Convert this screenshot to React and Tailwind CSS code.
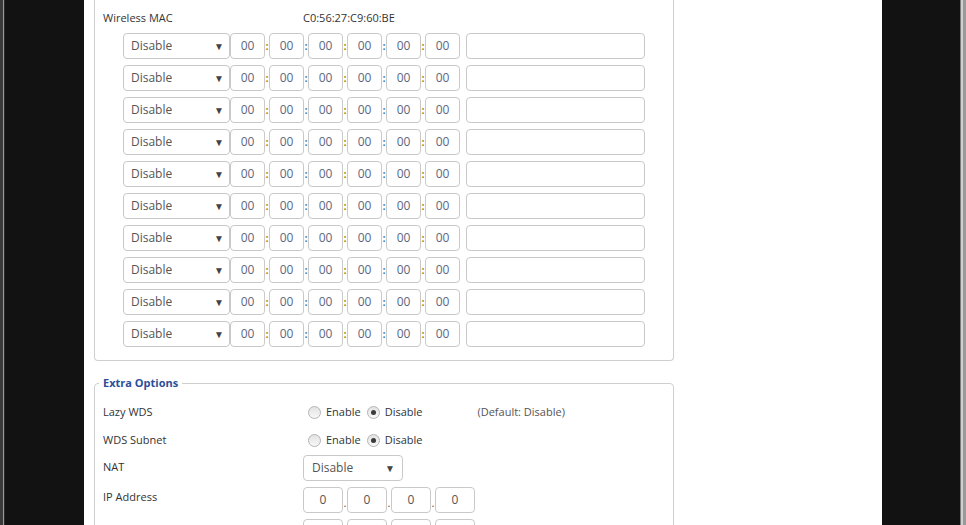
import React from 'react';

const FONT = { fontFamily: '"Open Sans", "Noto Sans", sans-serif' };

const MacRow = () => {
    const parts = ['00', '00', '00', '00', '00', '00'];
    return (
        <div className="flex h-[26px] items-stretch">
            <div className="relative flex w-[107px] items-center rounded-[4px] border border-[#c9c9c9] bg-white pl-[7px] text-[12px] text-[#555]">
                Disable
                <span className="absolute right-[5px] top-[7px] text-[10px] leading-none text-[#444]">▼</span>
            </div>
            <div className="flex">
                {parts.map((p, i) => (
                    <React.Fragment key={i}>
                        {i > 0 && (
                            <span className={`flex w-[4px] items-center justify-center text-[11px] font-bold ${i % 2 ? 'text-[#b08418]' : 'text-[#3d82b8]'}`}>:</span>
                        )}
                        <div className="flex w-[35px] items-center justify-center rounded-[4px] border border-[#c9c9c9] text-[12px] text-[#5a6680]">
                            {p}
                        </div>
                    </React.Fragment>
                ))}
            </div>
            <div className="ml-[6px] w-[179px] rounded-[4px] border border-[#c9c9c9] bg-white" />
        </div>
    );
};

const Radio = ({ checked }) => (
    <span className="flex h-[13px] w-[13px] items-center justify-center rounded-full border border-[#b4b4b4] bg-gradient-to-b from-[#e2e2e2] to-[#f8f8f8]">
        {checked && <span className="h-[5px] w-[5px] rounded-full bg-[#3a3a3a]" />}
    </span>
);

const RadioPair = () => (
    <div className="flex items-center pl-[5px] text-[11px] text-[#333]">
        <Radio />
        <span className="ml-[5px]">Enable</span>
        <span className="ml-[6px]"><Radio checked /></span>
        <span className="ml-[5px]">Disable</span>
    </div>
);

const IpRow = ({ values }) => (
    <div className="flex h-[26px]">
        {values.map((v, i) => (
            <React.Fragment key={i}>
                {i > 0 && <span className="flex w-[4px] items-end justify-center pb-[5px] text-[11px] leading-none text-[#555]">{v ? '.' : ''}</span>}
                <div className="flex w-[40px] items-center justify-center rounded-[4px] border border-[#c9c9c9] text-[12px] text-[#555]">{v}</div>
            </React.Fragment>
        ))}
    </div>
);

export default function App() {
    return (
        <div className="flex h-[525px] w-[966px] overflow-hidden" style={FONT}>
            {/* left dark side */}
            <div className="flex w-[84px] shrink-0 bg-[#121212]">
                <div className="w-[3px] bg-[#3a3a3a]" />
                <div className="w-[1px] bg-[#9a9a9a]" />
                <div className="w-[1px] bg-[#2a2a2a]" />
            </div>

            {/* main panel */}
            <div className="w-[798px] shrink-0 bg-white pl-[10px]">
                {/* WDS table */}
                <div className="w-[580px] rounded-b-[4px] border-x border-b border-[#cfcfcf] px-[8px] pb-[13px] pt-[8px]">
                    <div className="flex h-[20px] items-center text-[11px] text-[#333]">
                        <span className="w-[200px]">Wireless MAC</span>
                        <span>C0:56:27:C9:60:BE</span>
                    </div>
                    <div className="mt-[5px] flex flex-col gap-[6px] pl-[20px]">
                        {Array.from({ length: 10 }).map((_, i) => (
                            <MacRow key={i} />
                        ))}
                    </div>
                </div>

                {/* Extra Options */}
                <fieldset className="mt-[14px] w-[580px] rounded-[4px] border border-[#cfcfcf] px-[8px] pb-[10px] pt-[10px]">
                    <legend className="-ml-[4px] px-[4px] text-[11px] font-bold text-[#2b4f98]">Extra Options</legend>
                    <div className="flex flex-col text-[11px] text-[#333]">
                        <div className="flex h-[22px] items-center">
                            <span className="w-[200px]">Lazy WDS</span>
                            <RadioPair />
                            <span className="ml-[55px] text-[#555]">(Default: Disable)</span>
                        </div>
                        <div className="mt-[6px] flex h-[22px] items-center">
                            <span className="w-[200px]">WDS Subnet</span>
                            <RadioPair />
                        </div>
                        <div className="mt-[3px] flex h-[26px] items-center">
                            <span className="w-[200px]">NAT</span>
                            <div className="relative flex h-[26px] w-[100px] items-center rounded-[4px] border border-[#c9c9c9] pl-[8px] text-[12px] text-[#555]">
                                Disable
                                <span className="absolute right-[7px] top-[7px] text-[10px] leading-none text-[#444]">▼</span>
                            </div>
                        </div>
                        <div className="mt-[6px] flex h-[26px] items-center">
                            <span className="w-[200px] self-start pt-[2px]">IP Address</span>
                            <IpRow values={['0', '0', '0', '0']} />
                        </div>
                        <div className="mt-[6px] flex h-[26px] items-center">
                            <span className="w-[200px]" />
                            <IpRow values={['', '', '', '']} />
                        </div>
                    </div>
                </fieldset>
            </div>

            {/* right dark side */}
            <div className="flex w-[84px] shrink-0 bg-[#121212]">
                <div className="flex-1" />
                <div className="w-[1px] bg-[#7a7a7a]" />
                <div className="w-[2px] bg-[#cfcfcf]" />
                <div className="w-[3px] bg-[#9a9a9a]" />
            </div>
        </div>
    );
}
